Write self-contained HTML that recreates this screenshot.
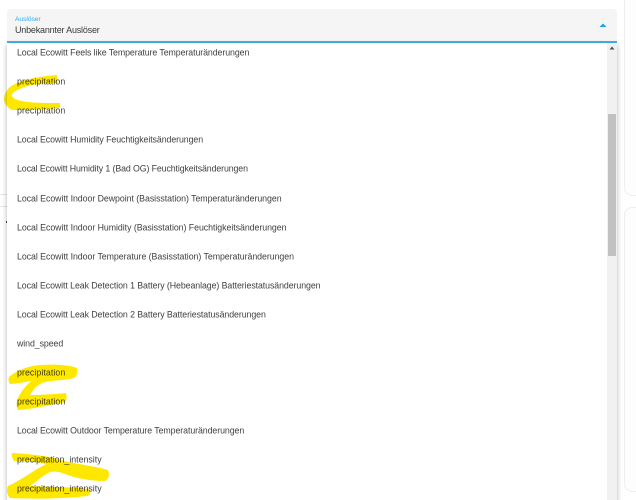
<!DOCTYPE html>
<html>
<head>
<meta charset="utf-8">
<style>
html,body{margin:0;padding:0;background:#fff;width:636px;height:500px;overflow:hidden;}
#wrap{position:absolute;left:0;top:0;width:636px;height:500px;overflow:hidden;font-family:"Liberation Sans",sans-serif;filter:blur(.35px);background:#fff;}
.abs{position:absolute;}
.row{position:absolute;left:17px;font-size:8.8px;line-height:12px;height:12px;color:#404040;white-space:nowrap;letter-spacing:-.08px;transform:translateY(.5px);}
.p{letter-spacing:.07px;}
.i{letter-spacing:0;}
.d{letter-spacing:-.05px;}
</style>
</head>
<body>
<div id="wrap">
<!-- background card hints -->
<div class="abs" style="left:624px;top:-10px;width:30px;height:204px;border:1px solid #eeeeee;border-radius:8px;background:#fdfdfd;"></div>
<div class="abs" style="left:624px;top:207px;width:30px;height:283px;border:1px solid #eeeeee;border-radius:8px;background:#fdfdfd;"></div>
<div class="abs" style="left:0;top:194px;width:8px;height:1px;background:#e6e6e6;"></div>
<div class="abs" style="left:0;top:206px;width:8px;height:1px;background:#e6e6e6;"></div>
<div class="abs" style="left:6px;top:221px;width:2px;height:2px;background:#444;"></div>

<!-- field -->
<div class="abs" style="left:7px;top:9px;width:610px;height:32px;background:#f5f5f5;border-radius:4px 4px 0 0;"></div>
<div class="abs" style="left:7px;top:41px;width:610px;height:2px;background:#3fb3e6;"></div>
<div class="abs" style="left:15px;top:15px;font-size:6.6px;line-height:9px;color:#22aef0;">Auslöser</div>
<div class="abs" style="left:15px;top:24px;font-size:9px;line-height:12px;color:#3a3a3a;letter-spacing:-.2px;">Unbekannter Auslöser</div>
<svg class="abs" style="left:599px;top:23px;" width="8" height="5"><path d="M0.5 4L4 0.5L7.5 4Z" fill="#10a5ee"/></svg>

<!-- dropdown -->
<div class="abs" style="left:7px;top:43px;width:610px;height:470px;background:#fff;box-shadow:0 2px 5px rgba(0,0,0,.3);"></div>
<div class="abs" style="left:607px;top:43px;width:10px;height:470px;background:#f1f1f1;"></div>
<div class="abs" style="left:608px;top:114px;width:8px;height:142px;background:#c1c1c1;"></div>
<svg class="abs" style="left:609px;top:46px;" width="6" height="4"><path d="M0.5 3.5L3 0.5L5.5 3.5Z" fill="#505050"/></svg>

<div class="row" style="top:46px;">Local Ecowitt Feels like Temperature Temperaturänderungen</div>
<div class="row p" style="top:75px;">precipitation</div>
<div class="row p" style="top:104px;">precipitation</div>
<div class="row" style="top:133px;">Local Ecowitt Humidity Feuchtigkeitsänderungen</div>
<div class="row" style="top:162px;letter-spacing:-.11px;">Local Ecowitt Humidity 1 (Bad OG) Feuchtigkeitsänderungen</div>
<div class="row d" style="top:192px;">Local Ecowitt Indoor Dewpoint (Basisstation) Temperaturänderungen</div>
<div class="row d" style="top:221px;">Local Ecowitt Indoor Humidity (Basisstation) Feuchtigkeitsänderungen</div>
<div class="row d" style="top:250px;">Local Ecowitt Indoor Temperature (Basisstation) Temperaturänderungen</div>
<div class="row" style="top:279px;">Local Ecowitt Leak Detection 1 Battery (Hebeanlage) Batteriestatusänderungen</div>
<div class="row" style="top:308px;">Local Ecowitt Leak Detection 2 Battery Batteriestatusänderungen</div>
<div class="row" style="top:337px;">wind_speed</div>
<div class="row p" style="top:366px;">precipitation</div>
<div class="row p" style="top:395px;">precipitation</div>
<div class="row" style="top:424px;">Local Ecowitt Outdoor Temperature Temperaturänderungen</div>
<div class="row i" style="top:453px;">precipitation_intensity</div>
<div class="row i" style="top:482px;">precipitation_intensity</div>

<!-- yellow marker -->
<svg class="abs" style="left:0;top:0;mix-blend-mode:multiply;" width="636" height="500" fill="#ffe800">
<path d="M57 75C42 76 25 79 15 84C8 87 4 93 4 100C5 105 8 108 12 110C28 110 45 109 60 108L60 103C45 103 30 103 22 101C15 100 11 97 12 94C16 90 26 85 40 84C46 83 52 83 57 83Z"/>
<path d="M10 376C18 370 28 366 40 365C55 364 70 365 77 368C78 372 77 376 74 378C62 381 50 380 42 383C36 386 32 391 30 395C42 395 55 394 66 393C67 396 67 400 65 402C50 405 32 409 18 410C16 406 16 401 19 396C22 390 26 386 31 381C25 382 15 384 10 384C8 381 8 378 10 376Z"/>
<path d="M12 453C30 454 50 456 60 460C75 464 95 466 108 470C110 474 109 479 105 481C90 481 75 478 65 474C60 472 55 471 50 472C42 476 36 482 30 486C50 487 70 487 90 489C91 492 90 495 88 496C60 499 30 499 10 498C7 495 6 490 8 486C20 481 34 470 46 464C34 461 22 461 14 461C12 458 11 455 12 453Z"/>
</svg>
</div>
</body>
</html>
